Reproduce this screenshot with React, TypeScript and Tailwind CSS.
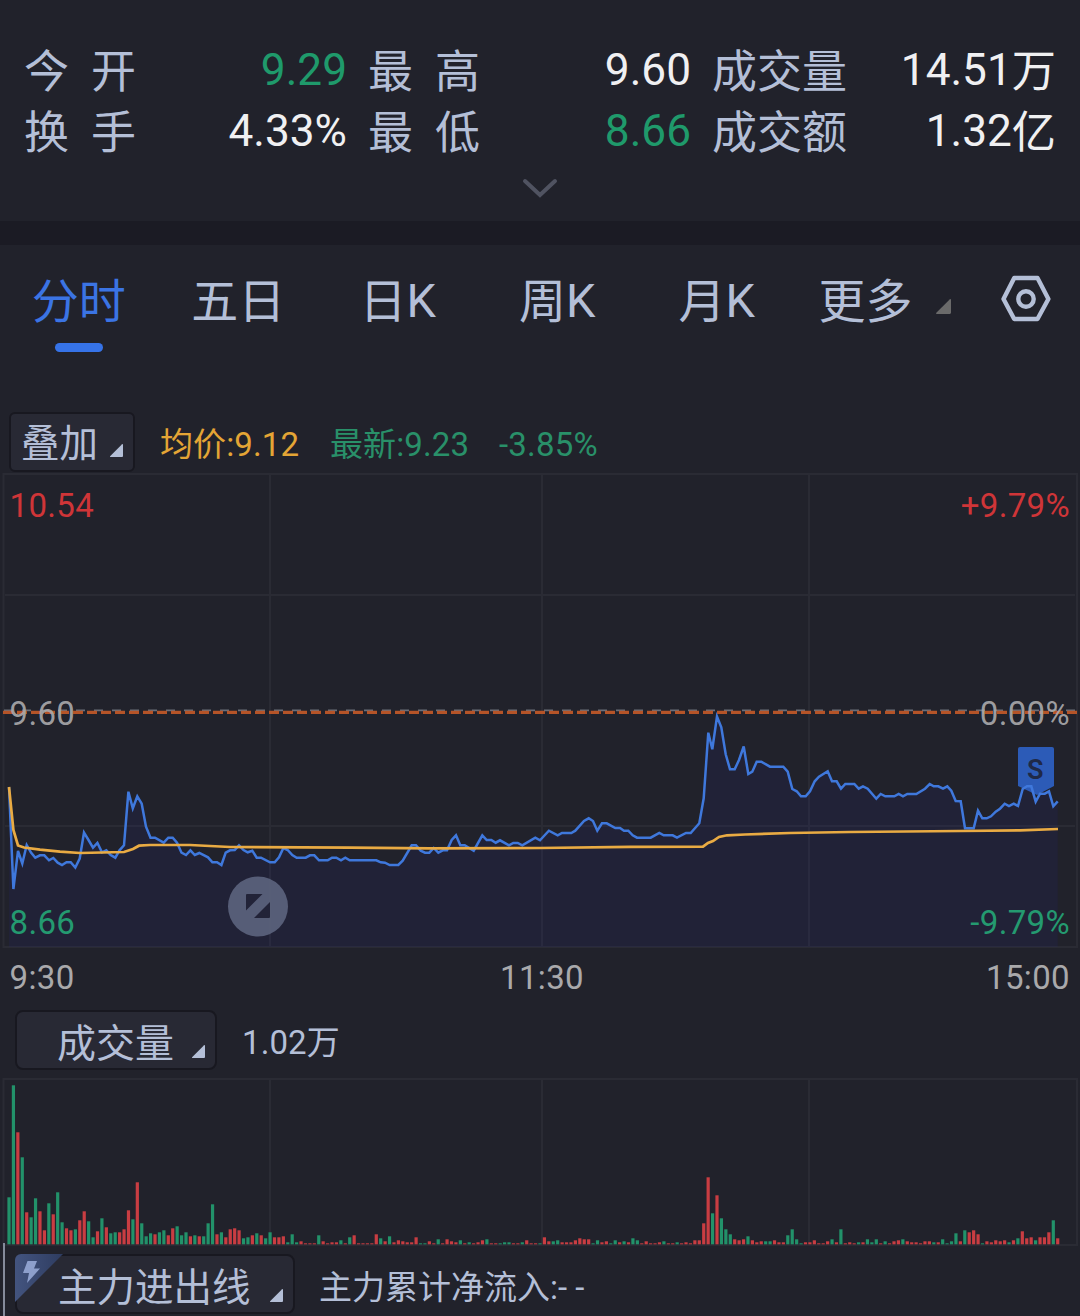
const tabs = ["分时", "五日", "日K", "周K", "月K"];

const stats = [
  { label: "今开", value: "9.29", unit: "", color: "text-[#1f9a6b]" },
  { label: "最高", value: "9.60", unit: "", color: "text-[#f0f0f2]" },
  { label: "成交量", value: "14.51", unit: "万", color: "text-[#f0f0f2]" },
  { label: "换手", value: "4.33%", unit: "", color: "text-[#f0f0f2]" },
  { label: "最低", value: "8.66", unit: "", color: "text-[#1f9a6b]" },
  { label: "成交额", value: "1.32", unit: "亿", color: "text-[#f0f0f2]" },
];

const pricePoints =
  "9,787 13.4,889 18,851 22.3,863.5 26.7,845 31,852.5 35.3,857.7 40,855.3 44.3,855.3 49,860.3 53.3,858 57.7,862.7 62,865 66.5,862.3 70.7,862.3 75.3,867.6 79.7,858.5 84,832.6 88.5,840 93,847.7 97.4,843 102,852.3 106.3,850.3 110.7,855 115.3,857.7 119.5,850.3 124,845.3 128.4,791.7 132.8,808.3 137.3,796.3 141.7,803.7 146,826.7 150.5,837.7 155,837.7 163.7,842.7 168.3,837.7 172.7,837.7 177,842.7 181.5,852.7 186,855 190.4,850.3 194.8,855 199.3,853 208,857.3 212.4,862.3 217,862.3 221.4,865 225.7,852.7 230,850.3 234.7,850 239,845.3 243.5,850 247.7,852.3 252.3,850.7 256.7,857.7 261,857.7 270,862.3 274.7,862.3 279,857.3 283.4,848 287.7,850 292.3,855 296.7,857.7 305.7,857.7 310,855.3 314.3,855.3 319,860.3 327.7,860.3 332,857.7 336.3,857.7 341,860.3 345.3,857.7 349.7,860.3 376.3,860.3 380.7,862.3 385,862.7 389.7,865 398.3,865 402.7,860.7 411.7,845.3 416,845.3 420.7,850.7 425,852.7 429.3,852.7 433.7,848 438.3,852.7 442.7,850.3 447,850.3 451.7,840 456,835.3 460.3,845.3 464.7,845.3 473.7,850.7 482.3,835.3 486.7,840 491.3,840 495.7,842.7 500,840.3 509,845.3 513.3,843 517.7,843 522.3,845.3 535.3,837.7 540,840.3 548.9,830.7 557.7,835.3 562,833 571.3,833 575.3,830.7 584,821 588.7,818.3 593,821 597.3,830.7 602,823.3 606.7,823.3 615.3,828 620,828 624,830.7 628.3,830.7 632.7,835.3 637,837.7 650.7,837.7 659.3,833 663.7,835.3 672.7,835.3 677,837.7 686,833 690.7,833 699.3,823.3 703.7,798.3 708.3,732.7 712.3,749.3 717,716.5 721.3,727.3 725.7,754.3 730,769.3 734.7,769.3 739,760 743.7,746.5 748.3,774 752.3,771.7 756.7,761.7 761.3,761.7 770,766.7 783.3,766.7 787.7,771.7 792.3,789 796.7,791.3 801,796.3 805.7,796.3 810,791.3 814.7,781.3 819,776.7 827.7,771.3 832,781.3 836.7,781.3 841,788.7 845.3,784 854.3,784 858.7,788.7 863,786.3 867.7,788.7 876.3,798.7 880.7,794 885.3,796.3 894.3,796.3 898.7,794 903,796.3 907.3,794 916.3,794 925,788.7 929.7,784 933.7,786.3 938.3,786.3 943,788.7 947.3,786.3 951.3,790.7 955.7,801 960.7,801.3 965,828.3 973.7,828.3 978,810.7 982.3,818.3 986.7,818.3 991,816.3 995.7,811.7 1000,808.7 1004.7,803.7 1009,806 1013.7,803.7 1018,806 1022.7,789 1027,786.3 1031.3,786.3 1035.7,801.7 1040,793.7 1044.7,793.7 1049,791.3 1053.3,806.3 1057.7,801.3";

const averagePoints =
  "9,787 13.4,830 18,845.5 24,847.5 40,849.7 60,851.7 80,853 124,852 133,849 139,845.7 150,845 190,845 230,847 350,847.7 430,848.3 540,848 630,846.9 703,846.7 708,843 713,841 719,837 727,835.3 745,834.5 790,833 850,832 960,831 1020,830.3 1058,829";

// one bar per minute, r = up, g = down, number = bar height
const volumes =
  "g47 g159 r112 g87 r32 g27 g46 r33 r14 g41 r30 g52 g22 r16 r14 g15 r24 r33 g23 g7 r13 g26 r17 g11 g12 r12 r15 r34 g25 r62 g21 g8 g11 r10 g12 g14 r9 r16 g18 g9 g12 r8 g9 r8 g8 g21 g40 r10 g12 r7 r15 r16 r14 g6 g7 r9 g11 r9 g6 g12 r7 r7 r8 g2 g10 g2 r3 r1 r1 r1 g9 r3 r1 r2 r2 g4 r1 g7 r9 r1 r1 r1 r1 r10 g6 r3 g8 r2 r4 r3 r2 r2 r7 g1 g1 r3 r1 g5 r1 r5 r3 r2 g4 r1 g2 r1 r2 r4 g5 r1 r1 g1 g2 g2 r1 r1 g2 r4 r1 r1 g1 r7 r3 g3 g4 r2 r2 r2 r4 r6 r5 r5 g1 g4 r2 r3 g1 g4 r2 g3 r2 g6 g4 r1 r3 r1 r1 r2 g3 r1 r1 g2 r1 r2 r1 r4 r4 r21 r67 g31 r49 g26 g15 g10 r5 r4 r5 g8 r4 r2 r3 g3 g3 r4 r2 r2 g9 g15 g5 g1 r2 r2 r4 r1 r1 r3 g5 r2 g15 r1 r2 r1 g2 r2 g5 g2 g5 r1 g3 r1 r3 r4 g5 r3 r2 r2 r1 r3 r3 g2 r2 g5 g1 g3 g11 r3 g14 r12 r14 r10 g1 r3 r2 r4 r3 r4 g2 r4 g6 r13 r6 r7 g4 r7 r7 r12 g24 r6".split(
    " ",
  );

const Corner = ({ className }: { className: string }) => (
  <svg className={className} viewBox="0 0 13 13">
    <path d="M13 0.6V12a1 1 0 0 1-1 1H0.8Q-0.5 13 0.3 12L11.8 0.4Q13-0.4 13 0.6Z" fill="currentColor" />
  </svg>
);

const Header = () => (
  <div className="h-[221px] pt-10">
    <div className="grid grid-cols-[322px_322px_343px] gap-x-[22px] pl-6 leading-[61px]">
      {stats.map((item) => (
        <div key={item.label} className="flex h-[61px] justify-between">
          <div className={item.label.length === 2 ? "flex gap-[22px] pt-[2px] text-[45px]" : "flex pt-[2px] text-[45px]"}>
            {item.label.split("").map((char) => (
              <span key={char}>{char}</span>
            ))}
          </div>
          <div className={`-mr-px flex text-[44.2px] ${item.color}`}>
            <span>{item.value}</span>
            {item.unit && <span className="pt-[2px]">{item.unit}</span>}
          </div>
        </div>
      ))}
    </div>
    <svg className="mx-auto mt-[15px] block h-[22px] w-[38px]" viewBox="0 0 38 22" fill="none">
      <path d="M4 4L19 18L34 4" stroke="#505361" strokeWidth="4" strokeLinecap="round" />
    </svg>
  </div>
);

const Tabs = () => (
  <div className="flex h-[167px] pt-[24px] text-[47px] leading-[64px]">
    {tabs.map((tab, i) => (
      <div key={tab} className="-ml-px mr-px flex w-[159.5px] flex-col items-center">
        <div className="flex h-[64px]">
          <span className={i === 0 ? "pt-px text-[#3b74e4]" : "pt-px"}>{tab.replace("K", "")}</span>
          {tab.endsWith("K") && <span>K</span>}
        </div>
        {i === 0 && <div className="mt-[10px] h-[9px] w-12 rounded-full bg-[#3673e8]" />}
      </div>
    ))}
    <div className="ml-[21px] w-[95px] pt-px whitespace-nowrap">更多</div>
    <Corner className="mt-[30px] ml-[22px] h-[15px] w-[15px] text-[#6a6a6a]" />
    <svg className="mt-[6px] ml-[50px] h-[48px] w-[50px]" viewBox="0 0 50 48" fill="none" stroke="#b4bfd7" strokeWidth="4.4">
      <path d="M13.2 3H36.5L47.4 24L36.5 44H13.2L2.5 24Z" strokeLinejoin="round" />
      <circle cx="25" cy="24" r="7.7" />
    </svg>
  </div>
);

const PriceChart = () => (
  <svg className="block h-[536px] w-full" viewBox="0 472 1080 536" fill="none">
    <g stroke="#2a2b34" strokeWidth="2">
      <path d="M3.5 474H1077V947H3.5Z" />
      <path d="M270 474V947M542 474V947M809 474V947M5 595H1075M5 826H1075" />
    </g>
    <polygon points={`9,947 ${pricePoints} 1057.7,947`} fill="#2a2a8a" fillOpacity="0.13" />
    <path d="M4 710.3H1077" stroke="#6b6e79" strokeWidth="1.8" strokeDasharray="9 9" />
    <path d="M3 712.3H1077" stroke="#b55428" strokeWidth="3.2" strokeDasharray="10 4" />
    <g fontSize="33" letterSpacing="0.35" fill="#a9a9ab">
      <text x="9.5" y="725" fillOpacity="0.93">9.60</text>
      <text x="1070" y="725" textAnchor="end" fillOpacity="0.93">0.00%</text>
      <text x="9.5" y="517" fill="#cf3538">10.54</text>
      <text x="1070" y="517" textAnchor="end" fill="#cf3538">+9.79%</text>
      <text x="9.5" y="934" fill="#249a70">8.66</text>
      <text x="1070" y="934" textAnchor="end" fill="#249a70">-9.79%</text>
      <text x="9.5" y="988.5">9:30</text>
      <text x="542" y="988.5" textAnchor="middle">11:30</text>
      <text x="1070" y="988.5" textAnchor="end">15:00</text>
    </g>
    <path d="M1018 749q0-2 2-2h32q2 0 2 2v37L1037 795L1018 786Z" fill="#2c5bb7" />
    <text x="1035.3" y="778.5" fontSize="27" fontWeight="600" textAnchor="middle" fill="#1f2947">S</text>
    <polyline points={pricePoints} stroke="#3f78dc" strokeWidth="2.5" />
    <polyline points={averagePoints} stroke="#e9ab43" strokeWidth="2.7" />
    <circle cx="258" cy="906.5" r="30" fill="#5a617a" fillOpacity="0.95" />
    <path d="M247 894H262.5L246 910.5V895Q246 894 247 894ZM270 902V917Q270 918 269 918H254Z" fill="#222338" />
  </svg>
);

const VolumeChart = () => (
  <svg className="block h-[176px] w-full" viewBox="0 1078 1080 176">
    <g stroke="#2a2b34" strokeWidth="2" fill="none">
      <path d="M3.5 1079H1077V1245H3.5Z" />
      <path d="M270 1079V1245M542 1079V1245M809 1079V1245" />
    </g>
    {volumes.map((v, i) => {
      const h = Number(v.slice(1));
      return (
        <rect
          key={i}
          x={7.4 + i * 4.425}
          y={1244.3 - h}
          width="3.2"
          height={h}
          fill={v[0] === "r" ? "#c93d42" : "#22926a"}
        />
      );
    })}
    <path d="M4 1243V1254" stroke="#858b9b" strokeWidth="2" />
  </svg>
);

const App = () => {
  return (
    <div className="h-[1316px] w-[1080px] overflow-hidden bg-[#21222b] font-['Roboto','Noto_Sans_CJK_SC',sans-serif] text-[#b4bfd7]">
      <Header />
      <div className="h-6 bg-[#1b1b24]" />
      <Tabs />

      <div className="flex h-[60px] pl-[9px] text-[33px]">
        <div className="flex h-[60px] w-[126px] rounded-md border-2 border-[#181820] bg-[#282934] pl-[10px] text-[38.5px] leading-[59px]">
          叠加
          <Corner className="mt-[30px] ml-[12px] h-[13px] w-[13px]" />
        </div>
        <div className="ml-[25px] w-[170px] leading-[65px] tracking-[0.1px] text-[#e4a535]">均价:9.12</div>
        <div className="w-[169px] leading-[65px] tracking-[0.1px] text-[#299069]">最新:9.23</div>
        <div className="leading-[65px] tracking-[0.2px] text-[#299069]">-3.85%</div>
      </div>

      <PriceChart />

      <div className="flex h-[70px] pt-[2px] pl-[15px]">
        <div className="flex h-[60px] w-[202px] rounded-lg border-2 border-[#181820] bg-[#282934] pl-[40px] text-[39px] leading-[65px]">
          成交量
          <Corner className="mt-[33px] ml-[18px] h-[13px] w-[13px]" />
        </div>
        <div className="ml-[25px] text-[33px] leading-[66px] tracking-[0.1px]">1.02万</div>
      </div>

      <VolumeChart />

      <div className="ml-[3px] flex h-[62px] border-l-2 border-[#858b9b] pl-[10px]">
        <div className="relative flex h-[60px] w-[280px] rounded-lg border-2 border-[#181820] bg-[#282934] pl-[41px] text-[38.5px] leading-[63px]">
          <svg className="absolute -top-[2px] -left-[2px] h-[48px] w-[48px] rounded-tl-md" viewBox="0 0 48 48">
            <defs>
              <linearGradient id="badge" x1="0" y1="0" x2="1" y2="0">
                <stop offset="0" stopColor="#43547f" />
                <stop offset="1" stopColor="#2e3c60" />
              </linearGradient>
            </defs>
            <path d="M0 0H48L0 48Z" fill="url(#badge)" />
            <path d="M12.5 7H22L19 14.5H25L12 29L14 19H8Z" fill="#8d9fcc" />
          </svg>
          主力进出线
          <Corner className="mt-[33px] ml-[19px] h-[13px] w-[13px]" />
        </div>
        <div className="ml-[24px] text-[33px] leading-[67px]">主力累计净流入:- -</div>
      </div>
    </div>
  );
};

export default App;
